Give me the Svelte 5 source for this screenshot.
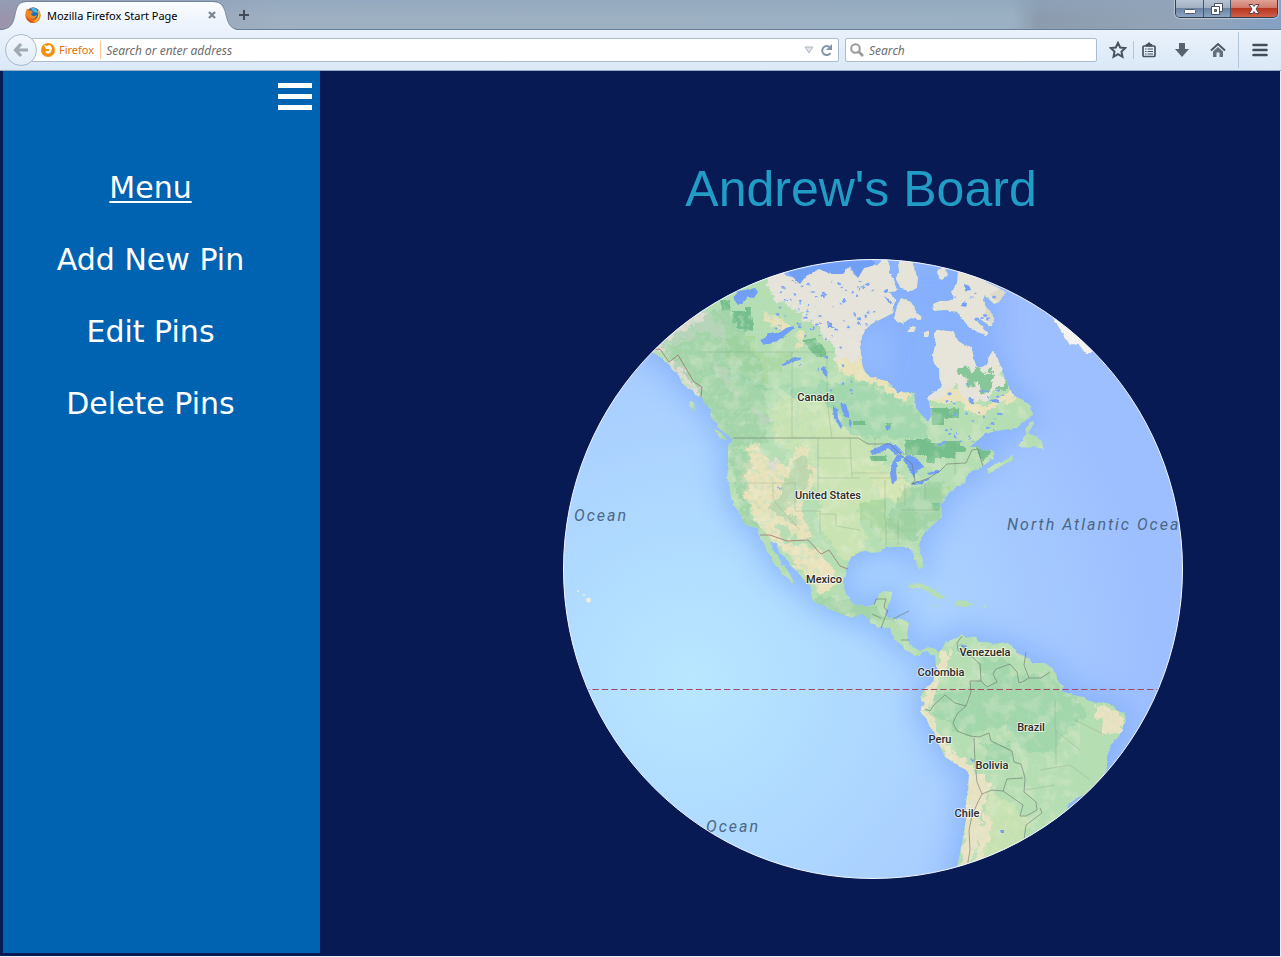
<script>
  const menuItems = ['Add New Pin', 'Edit Pins', 'Delete Pins'];

  const mainland =
    'M640 340 L652 352 660 357 664 361 670 365 672 370 678 373 681 381 684 386 692 390 696 396 702 397 703 402 707 405 711 409 710 417 717 423 719 429 725 433 733 440 729 443 728 447 728 467 727 478 730 490 731 498 735 507 740 513 743 522 748 526 757 528 760 537 765 545 767 552 772 557 773 563 778 567 783 575 788 578 792 584 794 581 790 575 787 570 781 563 778 555 773 551 770 542 777 543 779 552 784 557 788 561 793 568 798 572 803 579 807 583 811 587 812 599 817 603 823 605 829 609 837 612 846 616 853 617 862 614 868 618 870 623 879 627 890 628 893 637 896 641 902 645 906 651 910 652 914 655 920 656 922 652 927 651 931 655 935 655 936 665 938 670 935 675 933 682 928 686 922 693 921 699 925 704 921 707 921 713 926 718 930 727 935 733 937 740 941 749 945 757 953 762 960 767 967 770 969 775 968 790 966 800 967 810 966 820 963 837 960 853 957 867 950 890 1060 890 1066 811 1069 804 1077 798 1088 793 1097 787 1103 777 1107 767 1107 757 1110 747 1115 740 1119 736 1123 728 1126 720 1125 713 1120 712 1112 705 1104 702 1096 703 1087 700 1084 697 1077 696 1067 693 1061 691 1064 686 1059 683 1055 672 1052 668 1045 663 1037 663 1033 663 1027 657 1017 653 1012 646 1008 643 1000 643 995 644 987 642 980 642 975 637 970 637 965 638 962 634 957 638 950 640 945 643 942 649 938 652 933 648 928 647 920 651 913 647 908 641 907 633 909 623 902 619 888 618 885 614 887 608 890 602 893 592 884 591 879 594 877 602 870 606 862 606 854 604 850 600 845 591 843 582 847 567 850 557 860 552 866 551 872 553 880 552 887 547 898 547 907 547 911 550 913 553 916 563 919 569 923 568 923 560 920 551 919 543 925 532 933 525 942 517 941 505 946 497 950 492 957 487 965 483 967 476 972 471 980 468 987 463 992 459 995 456 993 450 984 451 978 447 970 447 978 440 985 434 996 431 1017 428 1022 423 1028 419 1033 414 1030 405 1023 400 1013 395 1009 387 1005 379 1002 370 998 360 993 351 989 357 987 365 978 368 973 360 972 347 964 345 958 341 953 332 946 331 937 330 934 334 936 343 933 355 934 363 939 369 940 378 942 387 936 391 928 397 930 407 931 416 928 422 921 414 916 408 914 393 905 392 897 392 891 384 883 380 870 377 864 371 862 363 861 355 860 347 862 336 865 330 871 324 877 321 893 313 894 304 896 299 888 292 897 291 894 280 889 273 890 266 886 258 877 265 864 268 858 278 852 273 850 266 843 274 831 274 819 269 806 276 800 284 795 278 786 276 780 268 750 250 600 300 Z';

  const islands = [
    'M898 260 L912 262 918 278 917 288 908 292 900 287 896 279 899 270Z',
    'M937 270 L945 267 948 275 942 280 938 278Z',
    'M901 298 L911 302 917 313 922 317 921 320 910 318 903 324 894 319 897 306Z',
    'M912 326 L916 327 914 332 907 332Z',
    'M924 332 L929 331 928 337 924 337Z',
    'M958 269 L970 272 982 280 997 287 1006 292 999 302 994 304 985 295 983 300 986 307 992 313 994 322 990 326 980 319 977 321 987 332 986 335 978 332 968 326 963 320 957 312 945 310 934 311 933 304 940 301 949 301 953 299 951 291 957 283Z',
    'M1050 313 L1057 324 1063 335 1070 344 1079 345 1085 353 1089 353 1096 350 1100 330Z',
    'M1032 421 L1034 423 1028 434 1036 436 1041 441 1044 450 1039 449 1034 446 1029 448 1018 446 1025 437 1027 427Z',
    'M988 469 L994 464 1003 462 1009 458 1012 454 1013 460 1003 465 994 471 988 474Z',
    'M907 586 L914 583 923 584 934 590 942 595 948 597 939 599 933 595 922 588 911 588Z',
    'M956 601 L964 600 972 604 976 605 966 606 954 606Z',
    'M934 605 L939 606 936 608Z',
    'M982 606 L987 606 985 608Z',
    'M690 401 L694 402 695 411 689 405Z',
    'M714 429 L723 434 728 441 720 438Z'
  ];

  const lakes = [
    'M734 299 L737 291 746 290 755 288 758 292 754 298 748 297 742 304 738 305Z',
    'M761 341 L768 333 779 333 786 328 794 326 793 329 783 337 773 343 763 345Z',
    'M781 365 L789 360 794 357 801 358 800 360 791 362 784 366Z',
    'M840 403 L846 404 849 414 849 418 844 417Z',
    'M833 405 L837 409 838 418 842 425 841 429 836 421 833 412Z',
    'M849 419 L852 421 851 427 849 425Z',
    'M870 451 L878 447 887 443 895 444 904 453 907 453 896 455 888 448 880 453 872 455Z',
    'M897 455 L901 455 903 458 897 463 896 472 897 480 892 484 890 474 892 463Z',
    'M907 455 L915 457 921 463 924 467 916 471 914 478 909 469 903 460Z',
    'M911 483 L919 482 929 478 930 479 921 484 913 485Z',
    'M927 473 L935 471 940 470 939 473 929 475Z',
    'M820 295 L828 294 824 297Z M827 321 L832 322 832 328 828 328Z M821 368 L824 366 828 373 826 378Z',
    'M885 427 L891 426 887 431Z M954 433 L956 439 954 437Z M969 397 L974 400 971 403 968 402Z M989 400 L997 399 1000 403 992 402Z',
    'M777 486 L781 489 780 490Z M1000 830 L1004 830 1004 833 1001 833Z M970 757 L974 761 973 763Z M960 644 L966 646 965 650Z',
    'M964 284 L970 286 971 290 965 291Z M962 302 L967 303 966 307 962 306Z',
    'M884 296 L891 301 889 303Z'
  ];

  // Repeatable pseudo-random scatter for the small lakes.
  function scatter(count, seed, x, y, w, h) {
    let s = seed;
    const next = () => (s = (s * 16807) % 2147483647) / 2147483647;
    return Array.from({ length: count }, () => ({
      x: x + next() * w,
      y: y + next() * h,
      rx: 0.6 + next() * 1.6,
      ry: 0.5 + next() * 1.3
    }));
  }
  const ponds = [
    ...scatter(75, 4211, 776, 280, 116, 50),
    ...scatter(16, 977, 800, 335, 60, 60),
    ...scatter(38, 7731, 938, 384, 70, 64),
    ...scatter(10, 315, 955, 280, 40, 40)
  ];

  const darkForest =
    'M732 311H745V307H751V317H753V331H744V329H737V323H733Z M720 300H730V310H722Z M905 440H916V439H930V443H942V441H960V447H966V452H955V458H935V463H926V455H905Z M931 408H959V418H944V425H932Z M870 456H887V461H870Z M977 441L990 438 991 452 982 462 976 448Z M966 374L974 376 976 384 968 388Z M886 423H892V427H886Z M803 340L815 338 826 350 826 356 818 358 810 350Z M932 503H940V510H934Z M853 421H865V425H853Z';
  const lightGreen =
    'M724 336H755V352H764V357H778V366H768V384H756V380H750V372H742V365H726Z M775 352H792V362H782V372H770V360H775Z M860 503H880V520H860Z M870 500H886V518H898V512H916V532H900V540H880V528H870Z M925 487H950V498H925Z';
  const prairie =
    'M775 398L800 394 825 402 845 430 868 442 885 462 888 480 880 506 862 500 858 520 866 535 862 550 848 560 832 548 820 520 815 480 800 460 778 440 768 418Z';
  const yellow =
    'M748 447L760 442 762 458 772 464 790 462 797 447 808 445 806 462 818 466 816 485 802 500 806 520 814 538 803 540 790 537 785 522 776 530 784 540 800 545 818 552 832 566 838 582 830 592 818 594 812 580 800 568 788 556 774 540 760 530 752 516 744 498 742 475Z M762 314L775 316 790 326 786 332 770 326Z M794 334L802 330 804 342 800 350 796 345Z M835 357L862 362 872 374 884 378 900 390 912 394 912 398 895 398 876 386 858 378 838 372Z M930 399L942 388 965 390 970 402 982 406 1012 392 1016 400 1000 404 984 414 968 412 958 402 934 406Z';
  const tundra =
    'M758 270L768 284 776 302 800 312 822 328 830 345 838 358 864 362 880 380 900 290 930 240 760 240Z M925 325H1000V352L1002 384 988 398 970 402 955 384 946 396 927 402Z';
  const mountains =
    'M645 350L690 318 706 312 724 326 726 342 715 336 702 332 690 322 700 340 680 340 660 352Z M668 362L680 360 692 384 702 390 702 398 688 390Z M714 362L728 368 732 386 742 400 735 396 722 380Z M750 406L764 412 772 424 765 424 755 416Z M768 462L778 460 776 470 770 470Z';
  const andes =
    'M932 668L942 655 952 644 946 670 934 694 926 712 940 730 952 752 968 762 978 774 988 780 990 790 980 815 976 845 966 878 956 880 966 830 968 776 950 760 936 744 922 712 924 692Z M984 812L992 820 986 856 976 866 978 830Z M1092 703L1120 712 1126 720 1118 734 1104 732 1100 720Z';
  const amazon =
    'M930 695L960 690 990 672 1020 676 1050 672 1060 690 1080 702 1088 716 1072 724 1060 740 1056 752 1034 752 1018 744 1012 730 992 728 970 736 950 728 935 716Z M980 742L1010 744 1012 762 990 762Z M980 655L1008 660 1012 675 982 674Z';
  const borders =
    'M733 438H858L868 444 890 444 900 454 912 464 915 480 912 484 929 478 940 471 947 464 966 463 972 450 978 449 981 460 983 466 M874 605L876 599 886 599 884 607 888 612 M872 614L881 618 M893 619L909 611 M901 640L909 640 M881 628L888 610 M962 636L957 643 958 650 964 656 969 654 980 664 981 681 987 687 997 682 993 674 996 669 1010 664 1017 672 1019 683 1022 682 1029 678 1024 665 1026 652 M1029 678L1041 678 1050 672 M981 681L970 681 971 692 966 706 955 703 945 695 933 706 930 711 925 709 M966 706L957 714 953 723 957 731 970 736 979 737 989 733 991 741 1012 751 1014 762 1021 764 1025 778 1024 792 1036 802 1037 810 1026 816 1020 816 1023 805 1003 791 1007 779 1023 778 M974 738L975 761 977 782 982 794 977 804 972 816 969 830 970 850 967 868 M982 794L992 790 1003 791 M1040 808L1042 813 1026 825 1024 840';
  const statelines =
    'M792 352V437 M827 352V400L832 438 M700 352H835 M818 438V500 M818 458H852 M818 478H860 M850 438L852 478 M745 483H795V510 M773 483V500L800 530 M795 511H820V535 M820 514H836V526L860 530 M852 473H900 M875 438V462 M870 478H905 M885 480V520 M900 510H940 M886 520V545 M898 520V545 M905 484V505 M925 484V500 M955 445V475 M1055 700V730L1080 750 M1040 770L1070 765 1090 780 M1056 730V765 M1075 720L1105 735 M1025 790L1055 785';
  const warmBorders =
    'M652 350L660 349 669 362 678 355 694 382 702 387 701 397M760 535H770L787 541 808 540 821 554 829 550 840 566 848 569';

  const labels = [
    ['Canada', 816, 401], ['United States', 828, 499], ['Mexico', 824, 583],
    ['Venezuela', 985, 656], ['Colombia', 941, 676], ['Brazil', 1031, 731],
    ['Peru', 940, 743], ['Bolivia', 992, 769], ['Chile', 967, 817]
  ];
  const seas = [['Ocean', 574, 521], ['North Atlantic Ocean', 1007, 530], ['Ocean', 706, 832]];
</script>

<div class="window">
  <header class="tabstrip">
    <div class="tab">
      <svg class="tab-shape" viewBox="0 0 238 30" aria-hidden="true">
        <defs><linearGradient id="tabfill" x2="0" y2="1"><stop offset="0" stop-color="#fafcff" /><stop offset="1" stop-color="#eaf2fb" /></linearGradient></defs>
        <path d="M0 30C11 29 13 24 15 15C17 5 19 2 27 2H213C221 2 224 6 226 15C228 24 231 29 238 30Z" fill="url(#tabfill)" />
        <path d="M0 29.5C11 29 13 24 15 15C17 5 19 1.500 27 1.500H213C221 1.500 224 6 226 15C228 24 231 29 238 29.500" fill="none" stroke="#66788c" stroke-opacity=".7" />
      </svg>
      <svg class="favicon" viewBox="0 0 16 16" aria-hidden="true">
        <circle cx="8" cy="8" r="7.500" fill="#e8601c" />
        <circle cx="8.500" cy="6" r="5.500" fill="#2470b8" />
        <path d="M6 1C10 0 13 3 13 6L9 5 7 3Z" fill="#4eb5e5" />
        <path d="M1 4L2 1.500 4 4C6 3 7 4 8 5L6 7C7 9 9 10 12 8C11 12 6 13 3 10C5 15 13 15 14 7C15 4 14 3 13 2C18 8 15 16 8 16C2 16-1 10 1 4Z" fill="#f08a20" />
        <path d="M1 9C2 14 6 16 10 15.500C6 14.500 3 12 1 9Z" fill="#c93a1c" />
        <path d="M13 3C15 5 15 9 13 12C12 14 10 15 8 15C13 13 14 8 13 3Z" fill="#ffd23d" />
      </svg>
      <span class="tab-title">Mozilla Firefox Start Page</span>
      <button class="plain tab-close" aria-label="Close tab">
        <svg width="10" height="10" viewBox="0 0 10 10"><path d="M2 2L8 8M8 2L2 8" stroke="#7b8794" stroke-width="2.400" /></svg>
      </button>
    </div>
    <button class="plain new-tab" aria-label="Open a new tab">
      <svg width="12" height="12" viewBox="0 0 12 12"><path d="M6 1V11M1 6H11" stroke="#424c58" stroke-width="2" /></svg>
    </button>
    <div class="controls">
      <button class="min" aria-label="Minimize"><svg width="12" height="14" viewBox="0 0 12 14"><rect x=".5" y="7.500" width="11" height="4" rx="1" fill="#fff" stroke="#535a66" /></svg></button>
      <button class="restore" aria-label="Restore"><svg width="14" height="14" viewBox="0 0 14 14"><path d="M4.500 1.500H12.500V9.500H4.500Z" fill="#fff" stroke="#4a5261" /><path d="M1.500 4.500H9.500V12.500H1.500Z" fill="#fff" stroke="#4a5261" /><path d="M4.500 7.500H6.500V9.500H4.500Z" fill="#70839c" stroke="#4a5261" /></svg></button>
      <button class="close" aria-label="Close"><svg width="14" height="14" viewBox="0 0 14 14"><path d="M2 2.500H5.500L7 4.500 8.500 2.500H12L9 7 12 11.500H8.500L7 9.500 5.500 11.500H2L5 7Z" fill="#fff" stroke="#5c4048" /></svg></button>
    </div>
  </header>

  <div class="toolbar">
    <button class="back" aria-label="Back">
      <svg width="16" height="16" viewBox="0 0 16 16"><path d="M8 2L2.500 8 8 14M3 8H15" fill="none" stroke="#a0a8b1" stroke-width="3.200" /></svg>
    </button>
    <div class="field address">
      <svg class="identity-icon" width="14" height="14" viewBox="0 0 14 14" aria-hidden="true">
        <circle cx="7" cy="7" r="7" fill="#f78f0c" /><path d="M3 2L6 3 9 2 11 5 10 9 7 11 4 9 6 8 8 8 8 6 5 6 4 4Z" fill="#fff" />
      </svg>
      <span class="identity">Firefox</span>
      <input type="text" aria-label="Address" placeholder="Search or enter address" />
      <button class="plain" aria-label="Show history"><svg width="10" height="8" viewBox="0 0 10 8"><path d="M1 1H9L5 7Z" fill="#dfe3e9" stroke="#aeb6c0" /></svg></button>
      <button class="plain reload" aria-label="Reload"><svg width="13" height="13" viewBox="0 0 13 13"><path d="M10 3.500A4.500 4.500 0 1 0 10.500 9" fill="none" stroke="#8395a8" stroke-width="2" /><path d="M12 0V6H6Z" fill="#8395a8" /></svg></button>
    </div>
    <div class="field search">
      <svg width="14" height="14" viewBox="0 0 14 14" aria-hidden="true"><circle cx="5.500" cy="5.500" r="4.300" fill="none" stroke="#999" stroke-width="2" /><path d="M9 9L13 13" stroke="#999" stroke-width="2.600" /></svg>
      <input type="text" aria-label="Search" placeholder="Search" />
    </div>
    <button class="plain tool star" aria-label="Bookmark this page"><svg width="18" height="18" viewBox="0 0 18 18"><path d="M9 1.800L11.200 6.500 16.200 7.100 12.500 10.600 13.500 15.800 9 13.200 4.500 15.800 5.500 10.600 1.800 7.100 6.800 6.500Z" fill="none" stroke="#47535f" stroke-width="2" /></svg></button>
    <span class="divider short"></span>
    <button class="plain tool" aria-label="Bookmarks"><svg width="16" height="16" viewBox="0 0 16 16"><rect x="2" y="4" width="12" height="10.500" rx="1" fill="none" stroke="#47535f" stroke-width="1.700" /><path d="M5 4V2.500H7V1H9V2.500H11V4Z" fill="#47535f" stroke="#47535f" /><path d="M4 7H5.500M6.500 7H12M4 9.500H5.500M6.500 9.500H12M4 12H5.500M6.500 12H12" stroke="#47535f" stroke-width="1" /></svg></button>
    <button class="plain tool wide" aria-label="Downloads"><svg width="16" height="16" viewBox="0 0 16 16"><path d="M5 1H11V7H15L8 15 1 7H5Z" fill="#56626e" /></svg></button>
    <button class="plain tool wide" aria-label="Home"><svg width="16" height="16" viewBox="0 0 16 16"><path d="M1 8.500L8 2 15 8.500" fill="none" stroke="#4c5763" stroke-width="2" /><path d="M3 9.500L8 5 13 9.500V15H9.500V10.500H6.500V15H3Z" fill="#64707b" /></svg></button>
    <span class="divider"></span>
    <button class="plain tool menu" aria-label="Open menu"><svg width="16" height="14" viewBox="0 0 16 14"><path d="M1.500 2H14.500M1.500 7H14.500M1.500 12H14.500" stroke="#424e59" stroke-width="2.600" stroke-linecap="round" /></svg></button>
  </div>

  <div class="page">
    <aside>
      <button class="plain burger" aria-label="Toggle menu"><svg width="34" height="27" viewBox="0 0 34 27"><path d="M0 0H34V5H0ZM0 11H34V16H0ZM0 22H34V27H0Z" fill="#fff" /></svg></button>
      <nav>
        <h2>Menu</h2>
        {#each menuItems as item}
          <a href="#top">{item}</a>
        {/each}
      </nav>
    </aside>
    <main>
      <h1>Andrew's Board</h1>
      <svg class="globe" viewBox="563 259 620 620" role="img" aria-label="Map of the Americas">
        <defs>
          <clipPath id="disc"><circle cx="873" cy="569" r="309.500" /></clipPath>
          <clipPath id="landclip"><path d={mainland} />{#each islands as d}<path {d} />{/each}</clipPath>
          <radialGradient id="sea" gradientUnits="userSpaceOnUse" cx="690" cy="680" r="480">
            <stop offset="0" stop-color="#b9e7ff" /><stop offset=".25" stop-color="#b1ddff" /><stop offset=".6" stop-color="#a9cfff" /><stop offset="1" stop-color="#9dbeff" />
          </radialGradient>
          <filter id="soft" x="-20%" y="-20%" width="140%" height="140%"><feGaussianBlur stdDeviation="14" /></filter>
          <filter id="rough" x="-5%" y="-5%" width="110%" height="110%"><feTurbulence type="fractalNoise" baseFrequency=".11" numOctaves="3" seed="4" /><feDisplacementMap in="SourceGraphic" scale="14" xChannelSelector="R" yChannelSelector="G" /></filter>
          <filter id="coast" x="-5%" y="-5%" width="110%" height="110%"><feTurbulence type="fractalNoise" baseFrequency=".25" numOctaves="2" seed="8" /><feDisplacementMap in="SourceGraphic" scale="3" xChannelSelector="R" yChannelSelector="G" /></filter>
          <filter id="relief" x="0" y="0" width="100%" height="100%"><feTurbulence type="fractalNoise" baseFrequency=".2" numOctaves="4" seed="11" /><feColorMatrix values="0 0 0 0 .45  0 0 0 0 .73  0 0 0 0 .52  4 0 0 0 -1.900" /></filter>
          <filter id="light" x="0" y="0" width="100%" height="100%"><feTurbulence type="fractalNoise" baseFrequency=".07" numOctaves="5" seed="23" /><feColorMatrix values="0 0 0 0 .88  0 0 0 0 .9  0 0 0 0 .72  0 4 0 0 -1.900" /></filter>
        </defs>
        <g clip-path="url(#disc)">
          <rect x="563" y="259" width="620" height="620" fill="url(#sea)" />
          <g filter="url(#soft)" fill="#78a6fb" stroke="#78a6fb" stroke-width="14" opacity=".62">
            <path d={mainland} /><path d="M890 260H990V350H930V390H890Z" />
          </g>
          <g filter="url(#coast)"><g clip-path="url(#landclip)">
            <rect x="563" y="240" width="620" height="650" fill="#b6deb3" />
            <g filter="url(#rough)">
              <path d="M705 360L760 390 860 380 920 410 930 440 850 436 830 405 780 390Z" fill="#a3d7ae" />
              <path d={prairie} fill="#c9e3b3" />
              <path d="M867 470L905 474 912 494 900 502 880 496Z" fill="#d6e6b4" />
              <path d={yellow} fill="#eae2bb" />
              <path d={amazon} fill="#a2d6ab" />
              <path d="M990 790L1030 820 1010 880 970 880Z" fill="#c8e2b2" />
              <path d={andes} fill="#e9e3c3" />
              <path d={tundra} fill="#e7e4da" />
              <path d={mountains} fill="#dfdcd2" />
            </g>
            <path d={lightGreen} fill="#a8d59b" opacity=".7" />
            <path d={darkForest} fill="#76bf8d" />
            <path d="M660 345L725 305 765 370 768 440 728 450 705 400ZM730 450H750L745 510 765 535 742 525ZM800 455L815 470 800 495 784 510 800 525 770 510ZM900 490L945 480 940 520 910 540 885 530ZM815 595L875 605 895 625 820 610Z" filter="url(#rough)" fill="#8fca9e" opacity=".5" />
            <g clip-path="url(#landclip)"><rect x="640" y="300" width="180" height="310" filter="url(#relief)" opacity=".5" /><rect x="640" y="340" width="440" height="530" filter="url(#light)" opacity=".26" /><rect x="870" y="470" width="250" height="400" filter="url(#relief)" opacity=".16" /></g>
            <path d={tundra} fill="#e7e4da" opacity=".6" filter="url(#rough)" />
            <path d="M925 325H1000V352L1002 370 980 365 960 362 945 384 927 402Z" fill="#e7e4da" />
            <path d={islands.slice(0, 6).join(' ')} fill="#e6e3d8" />
            <path d={islands[6]} fill="#f2f2f0" />
            <path d="M986 307L995 304 994 326 985 315ZM1000 288L1008 290 999 304 990 294Z" fill="#ded9c8" />
            <path d="M959 368L968 366 972 374 980 368 985 376 992 368 992 388 984 395 976 384 966 388 964 378ZM998 382H1006V389H998Z" fill="#86c698" filter="url(#rough)" />
          </g></g>
          <g fill="#729ff6" filter="url(#coast)">
            {#each lakes as d}<path {d} />{/each}
            <path d="M780 265L800 284 806 276 819 269 831 274 843 274 850 266 858 278 864 268 877 265 870 258 840 255Z" />
          </g>
          <g fill="#7ca7f7" clip-path="url(#landclip)">
            <g filter="url(#coast)">{#each ponds as p}<ellipse cx={p.x} cy={p.y} rx={p.rx} ry={p.ry} />{/each}</g>
          </g>
          <g fill="#eeeedd"><ellipse cx="588.500" cy="600" rx="2.500" ry="2.500" /><circle cx="584" cy="595" r="1" /><circle cx="578" cy="591" r="1" /></g>
          <g fill="none" stroke-linejoin="round">
            <path d={statelines} stroke="#829c84" stroke-width=".6" opacity=".5" />
            <path d={borders} stroke="#6b766b" stroke-width=".8" opacity=".75" />
            <path d={warmBorders} stroke="#a0726f" stroke-width=".8" />
            <path d="M583 689.500H1170" stroke="#a84862" stroke-dasharray="6.400 3" />
          </g>
          <g class="country">{#each labels as [text, x, y]}<text {x} {y}>{text}</text>{/each}</g>
          <g class="ocean">{#each seas as [text, x, y]}<text {x} {y}>{text}</text>{/each}</g>
        </g>
        <circle cx="873" cy="569" r="309.500" fill="none" stroke="#f3f7ff" />
      </svg>
    </main>
  </div>
</div>

<style>
  :global(body) { margin: 0; background: #eceef1; }
  .window { box-sizing: border-box; min-height: 100vh; display: flex; flex-direction: column; padding-bottom: 1px; font-family: "Open Sans", sans-serif; font-size: 12px; }
  button, input { font: inherit; }
  .plain { border: 0; padding: 0; background: none; display: flex; align-items: center; justify-content: center; }
  svg { display: block; flex: none; }

  .tabstrip { height: 29px; display: flex; border-bottom: 1px solid #66809a; background: linear-gradient(#8da3bb99, #a3b3c300 60%), linear-gradient(90deg, #9b94ac, #9eb0c2 22%, #9bb1c3 79%, #8c9cae 81%, #94a5b9 93%, #84a0c4); }
  .tab { position: relative; box-sizing: border-box; width: 238px; height: 30px; padding: 0 21px 0 25px; display: flex; align-items: center; gap: 6px; }
  .tab-shape { position: absolute; inset: 0; width: 100%; height: 100%; }
  .favicon { position: relative; width: 16px; height: 16px; }
  .tab-title { position: relative; flex: 1; font-family: "Noto Sans", sans-serif; font-size: 11px; color: #000; white-space: nowrap; }
  .tab-close { position: relative; }
  .new-tab { width: 12px; height: 30px; }
  .controls { margin-left: auto; margin-right: 3px; display: flex; height: 18px; box-sizing: border-box; border: 1px solid #35404f; border-top: 0; border-radius: 0 0 5px 5px; overflow: hidden; box-shadow: 0 0 1px 1px #ffffff66; }
  .controls button { border: 0; padding: 0; display: flex; align-items: center; justify-content: center; width: 27px; background: linear-gradient(#b7c4d4, #a1b0c4 45%, #6c84a3 50%, #8ba5c4); }
  .controls button + button { border-left: 1px solid #4a5567; }
  .controls .close { width: 47px; background: linear-gradient(#e0a397, #cf7a6b 45%, #b93620 50%, #d0604a); }

  .toolbar { height: 40px; display: flex; align-items: center; padding-left: 5px; border-bottom: 1px solid #97adc4; background: linear-gradient(#eaf2fb, #dae8f8); }
  .back { position: relative; box-sizing: border-box; width: 32px; height: 32px; flex: none; padding: 0; display: flex; align-items: center; justify-content: center; border: 1px solid #a8bacb; border-radius: 50%; background: linear-gradient(#f2f7fc, #e2edf9); }
  .field { box-sizing: border-box; height: 24px; display: flex; align-items: center; border: 1px solid #a9bdd0; border-radius: 2px; background: #fff; }
  .field input { flex: 1; min-width: 0; border: 0; padding: 0; outline: 0; background: none; font-size: 12px; color: #333; }
  .field input::placeholder { color: #6d6d6d; opacity: 1; font-style: italic; font-family: "Noto Sans", sans-serif; font-size: 12px; }
  .address { flex: 1; margin-left: -6px; padding: 0 5px 0 9px; }
  .identity { margin: 0 5px 0 4px; padding-right: 6px; border-right: 1px solid #f5c898; font-family: "Noto Sans", sans-serif; font-size: 11px; line-height: 18px; color: #e07000; }
  .reload { margin-left: 6px; }
  .search { width: 252px; margin-left: 6px; padding-left: 4px; gap: 5px; }
  .tool { width: 30px; height: 32px; }
  .star { margin-left: 6px; }
  .wide { width: 36px; }
  .menu { width: 42px; }
  .divider { width: 1px; height: 36px; margin-left: 2px; background: #b4c5d8; }
  .short { height: 18px; margin-left: 0; }

  .page { flex: 1; display: flex; margin-right: 1px; padding: 0 0 3px 3px; background: #081a54; }
  aside { box-sizing: border-box; width: 317px; flex: none; display: flex; flex-direction: column; padding: 12px 8px; background: #0063b1; }
  .burger { align-self: flex-end; }
  nav { display: flex; flex-direction: column; align-items: center; margin-top: 42px; padding-right: 22px; font-family: "DejaVu Sans", sans-serif; font-size: 30px; line-height: 72px; color: #fff; }
  nav h2 { margin: 0; font: inherit; text-decoration: underline; text-decoration-thickness: 2px; text-underline-offset: 3px; }
  nav a { color: inherit; text-decoration: none; }
  main { flex: 1; display: flex; flex-direction: column; align-items: center; padding: 88px 0 0 146px; }
  h1 { margin: 0 24px 40px 0; font-family: "Liberation Sans", Arial, sans-serif; font-size: 50px; line-height: 60px; font-weight: 400; color: #219cc5; }
  .globe { width: 620px; max-width: 100%; }
  .country { font-family: Roboto, sans-serif; font-size: 11px; font-weight: 500; text-anchor: middle; fill: #2b2b2b; stroke: #ffffff99; stroke-width: 2px; stroke-linejoin: round; paint-order: stroke; }
  .ocean { font-family: Roboto, sans-serif; font-size: 16px; font-style: italic; letter-spacing: 2px; fill: #4b6787; }
</style>
